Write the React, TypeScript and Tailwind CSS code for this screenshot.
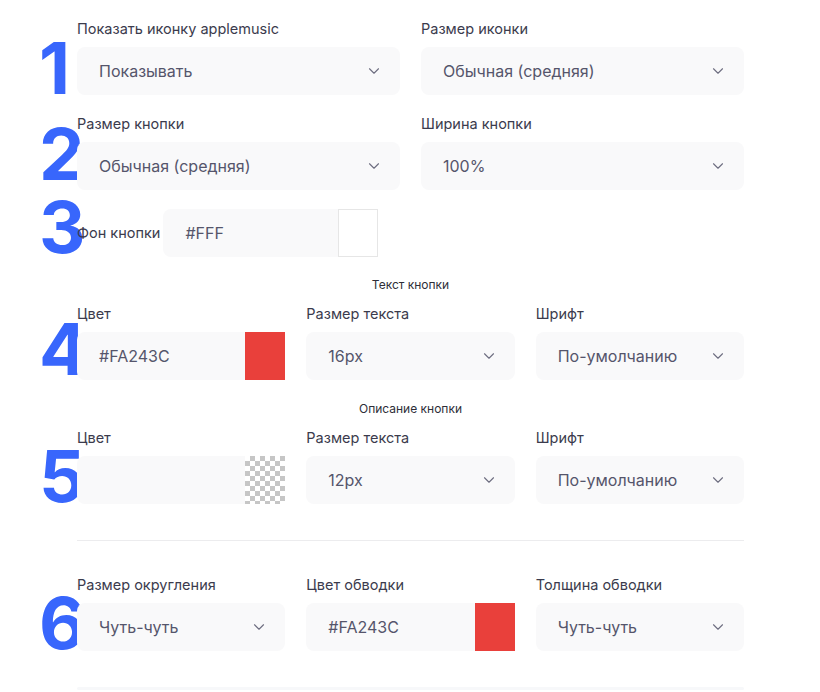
import React from 'react';
import { ChevronDown } from 'lucide-react';

// big step number; the 48px box lines up with the field row, the glyph spills over it
const Num: React.FC<{ n: string; className?: string }> = ({ n, className = '' }) => (
  <div
    className={`-ml-px h-12 w-[38px] shrink-0 overflow-visible whitespace-nowrap text-[72px] font-bold leading-[48px] text-[#3866fc] ${className}`}
  >
    {n}
  </div>
);

const Label: React.FC<{ children: React.ReactNode }> = ({ children }) => (
  <div className="mb-2 h-5 text-[14.5px] leading-5 text-[#3b3b4d]">{children}</div>
);

const Select: React.FC<{ value: string }> = ({ value }) => (
  <div className="flex h-12 items-center justify-between rounded-lg bg-[#f9f9fa] pl-[22px] pr-[17px] text-base text-[#55556b]">
    <span>{value}</span>
    <ChevronDown size={18} strokeWidth={1.5} className="text-[#6e6e80]" />
  </div>
);

const ColorInput: React.FC<{ value: string; swatch: 'red' | 'white' | 'none' }> = ({ value, swatch }) => (
  <div className="flex h-12">
    <div className="flex flex-1 items-center rounded-l-lg bg-[#f9f9fa] pl-[22px] text-base text-[#55556b]">
      {value}
    </div>
    {swatch === 'red' && <div className="w-10 bg-[#e9403b]" />}
    {swatch === 'white' && <div className="w-10 border border-[#e6e6e6] bg-white" />}
    {swatch === 'none' && (
      <div className="w-10 bg-[conic-gradient(#c6c6c6_25%,#ffffff_0_50%,#c6c6c6_0_75%,#ffffff_0)] bg-[length:10px_10px]" />
    )}
  </div>
);

const Field: React.FC<{ label: string; children: React.ReactNode }> = ({ label, children }) => (
  <div>
    <Label>{label}</Label>
    {children}
  </div>
);

const SectionTitle: React.FC<{ children: React.ReactNode }> = ({ children }) => (
  <div className="h-4 text-center text-xs leading-4 text-[#2e2e38]">{children}</div>
);

export default function App() {
  return (
    <div className="min-h-screen bg-white font-['Inter',sans-serif]">
      <div className="flex w-[744px] flex-col pl-10 pt-[19px]">
        {/* icon */}
        <div className="flex items-end">
          <Num n="1" className="mb-[3px]" />
          <div className="grid w-[667px] grid-cols-2 gap-x-[21px]">
            <Field label="Показать иконку applemusic">
              <Select value="Показывать" />
            </Field>
            <Field label="Размер иконки">
              <Select value="Обычная (средняя)" />
            </Field>
          </div>
        </div>

        {/* button size */}
        <div className="mt-[19px] flex items-end">
          <Num n="2" className="mb-[12px]" />
          <div className="grid w-[667px] grid-cols-2 gap-x-[21px]">
            <Field label="Размер кнопки">
              <Select value="Обычная (средняя)" />
            </Field>
            <Field label="Ширина кнопки">
              <Select value="100%" />
            </Field>
          </div>
        </div>

        {/* background */}
        <div className="mt-[13px] flex items-end">
          <Num n="3" className="mb-[6px]" />
          <div className="flex w-[667px] items-center">
            <span className="mr-[3px] text-[14.5px] text-[#3b3b4d]">Фон кнопки</span>
            <div className="w-[215px]">
              <ColorInput value="#FFF" swatch="white" />
            </div>
          </div>
        </div>

        <div className="ml-[37px] mt-5 w-[667px]">
          <SectionTitle>Текст кнопки</SectionTitle>
        </div>

        <div className="mt-[11px] flex items-end">
          <Num n="4" className="mb-[7px]" />
          <div className="grid w-[667px] grid-cols-3 gap-x-[21px]">
            <Field label="Цвет">
              <ColorInput value="#FA243C" swatch="red" />
            </Field>
            <Field label="Размер текста">
              <Select value="16px" />
            </Field>
            <Field label="Шрифт">
              <Select value="По-умолчанию" />
            </Field>
          </div>
        </div>

        <div className="ml-[37px] mt-[21px] w-[667px]">
          <SectionTitle>Описание кнопки</SectionTitle>
        </div>

        <div className="mt-[11px] flex items-end">
          <Num n="5" className="mb-[4px]" />
          <div className="grid w-[667px] grid-cols-3 gap-x-[21px]">
            <Field label="Цвет">
              <ColorInput value="" swatch="none" />
            </Field>
            <Field label="Размер текста">
              <Select value="12px" />
            </Field>
            <Field label="Шрифт">
              <Select value="По-умолчанию" />
            </Field>
          </div>
        </div>

        <div className="ml-[37px] mt-9 h-px w-[667px] bg-[#ececee]" />

        {/* border */}
        <div className="mt-[34px] flex items-end">
          <Num n="6" className="mb-[4px]" />
          <div className="grid w-[667px] grid-cols-3 gap-x-[21px]">
            <Field label="Размер округления">
              <Select value="Чуть-чуть" />
            </Field>
            <Field label="Цвет обводки">
              <ColorInput value="#FA243C" swatch="red" />
            </Field>
            <Field label="Толщина обводки">
              <Select value="Чуть-чуть" />
            </Field>
          </div>
        </div>

        <div className="ml-[37px] mt-[36px] h-[3px] w-[667px] rounded-full bg-[#f7f8fa]" />
      </div>
    </div>
  );
}
